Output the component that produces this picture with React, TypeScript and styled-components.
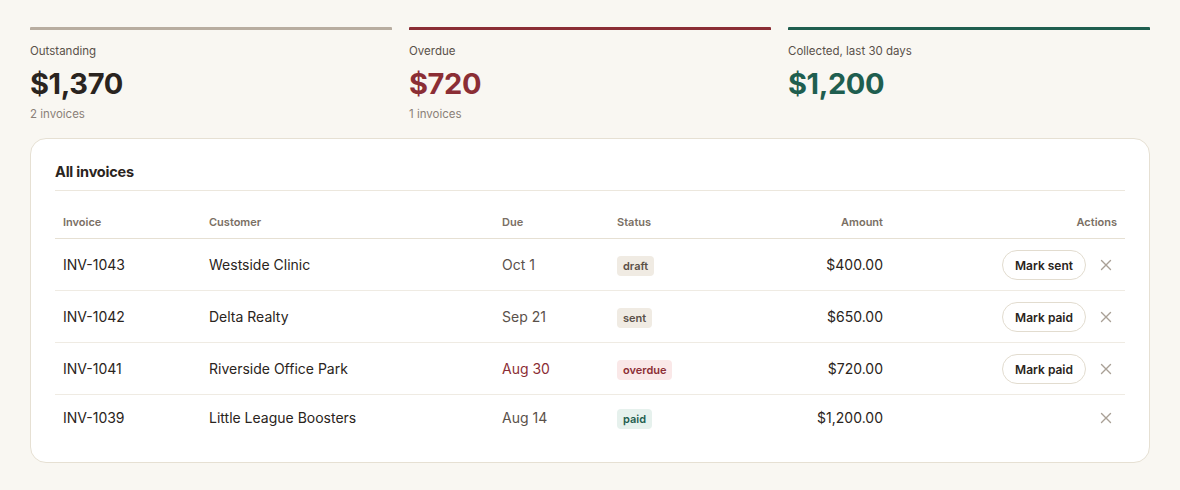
import React from "react";
import styled, { createGlobalStyle } from "styled-components";

const Global = createGlobalStyle`
  html, body { margin: 0; padding: 0; background: #f9f7f2; }
  body { font-family: Inter, "Noto Sans", sans-serif; color: #2a2420; -webkit-font-smoothing: antialiased; }
  * { box-sizing: border-box; }
`;

const Page = styled.div`
  padding: 27px 30px 26px;
  display: flex;
  flex-direction: column;
  gap: 17px;
`;

const Stats = styled.div`
  display: grid;
  grid-template-columns: repeat(3, 1fr);
  gap: 17px;
`;

const Stat = styled.div<{ $accent: string }>`
  border-top: 3px solid ${(p) => p.$accent};
  padding-top: 13px;
  height: 94px;
  border-radius: 1px;
`;

const StatLabel = styled.div`
  font-size: 11.5px;
  color: #5a514a;
  line-height: 16px;
`;

const StatValue = styled.div<{ $color: string }>`
  font-size: 29px;
  font-weight: 700;
  letter-spacing: -0.4px;
  color: ${(p) => p.$color};
  line-height: 36px;
  margin-top: 7px;
`;

const StatSub = styled.div`
  font-size: 11.5px;
  color: #8a8078;
  line-height: 16px;
  margin-top: 4px;
`;

const Card = styled.div`
  background: #ffffff;
  border: 1px solid #e6e0d3;
  border-radius: 16px;
  padding: 23px 24px 22px;
`;

const CardTitle = styled.h2`
  margin: 0;
  font-size: 14.5px;
  font-weight: 700;
  letter-spacing: -0.2px;
  line-height: 20px;
  padding-bottom: 8px;
  border-bottom: 1px solid #ece7dd;
`;

const Table = styled.table`
  width: 100%;
  border-collapse: collapse;
  margin-top: 16px;
`;

const Th = styled.th<{ $align?: string; $w?: number }>`
  text-align: ${(p) => p.$align || "left"};
  font-size: 11px;
  font-weight: 600;
  color: #7a6f64;
  padding: 8px 8px 9px;
  border-bottom: 1px solid #e6e0d3;
  ${(p) => (p.$w ? `width: ${p.$w}px;` : "")}
`;

const Tr = styled.tr`
  & + & td { border-top: 1px solid #efebe3; }
`;

const Td = styled.td<{ $align?: string; $color?: string }>`
  text-align: ${(p) => p.$align || "left"};
  font-size: 14px;
  line-height: 20px;
  color: ${(p) => p.$color || "#2a2420"};
  padding: 11px 8px 10px;
`;

const Badge = styled.span<{ $bg: string; $fg: string }>`
  display: inline-block;
  font-size: 11px;
  font-weight: 600;
  background: ${(p) => p.$bg};
  color: ${(p) => p.$fg};
  padding: 3px 6px;
  border-radius: 4px;
  line-height: 14px;
  vertical-align: middle;
`;

const Actions = styled.div`
  display: flex;
  justify-content: flex-end;
  align-items: center;
  gap: 9px;
`;

const PillButton = styled.button`
  font-family: inherit;
  font-size: 12px;
  font-weight: 600;
  color: #2a2420;
  background: #fff;
  border: 1px solid #e2dccf;
  border-radius: 999px;
  height: 30px;
  padding: 0 12px;
  cursor: pointer;
`;

const IconButton = styled.button`
  border: none;
  background: transparent;
  color: #a9a096;
  width: 22px;
  height: 24px;
  padding: 0;
  display: flex;
  align-items: center;
  justify-content: center;
  cursor: pointer;
`;

const X = () => (
  <svg width="12" height="12" viewBox="0 0 12 12" fill="none" stroke="currentColor" strokeWidth="1.4" strokeLinecap="round">
    <path d="M1.5 1.5 L10.5 10.5 M10.5 1.5 L1.5 10.5" />
  </svg>
);

const badgeColors: Record<string, [string, string]> = {
  draft: ["#f0ebe3", "#5a5048"],
  sent: ["#f0ebe3", "#5a5048"],
  overdue: ["#fae8e8", "#8b2e35"],
  paid: ["#e6f1ed", "#1f5e4f"],
};

const rows = [
  { id: "INV-1043", customer: "Westside Clinic", due: "Oct 1", status: "draft", amount: "$400.00", action: "Mark sent" },
  { id: "INV-1042", customer: "Delta Realty", due: "Sep 21", status: "sent", amount: "$650.00", action: "Mark paid" },
  { id: "INV-1041", customer: "Riverside Office Park", due: "Aug 30", status: "overdue", amount: "$720.00", action: "Mark paid" },
  { id: "INV-1039", customer: "Little League Boosters", due: "Aug 14", status: "paid", amount: "$1,200.00", action: "" },
];

export default function App() {
  return (
    <>
      <Global />
      <Page>
        <Stats>
          <Stat $accent="#b8ada0">
            <StatLabel>Outstanding</StatLabel>
            <StatValue $color="#2a2420">$1,370</StatValue>
            <StatSub>2 invoices</StatSub>
          </Stat>
          <Stat $accent="#8b2e35">
            <StatLabel>Overdue</StatLabel>
            <StatValue $color="#8b2e35">$720</StatValue>
            <StatSub>1 invoices</StatSub>
          </Stat>
          <Stat $accent="#1f5e4f">
            <StatLabel>Collected, last 30 days</StatLabel>
            <StatValue $color="#1f5e4f">$1,200</StatValue>
          </Stat>
        </Stats>
        <Card>
          <CardTitle>All invoices</CardTitle>
          <Table>
            <thead>
              <tr>
                <Th $w={146}>Invoice</Th>
                <Th $w={293}>Customer</Th>
                <Th $w={115}>Due</Th>
                <Th $w={120}>Status</Th>
                <Th $align="right">Amount</Th>
                <Th $align="right" $w={234}>Actions</Th>
              </tr>
            </thead>
            <tbody>
              {rows.map((r) => (
                <Tr key={r.id}>
                  <Td>{r.id}</Td>
                  <Td>{r.customer}</Td>
                  <Td $color={r.status === "overdue" ? "#8b2e35" : "#5a514a"}>{r.due}</Td>
                  <Td>
                    <Badge $bg={badgeColors[r.status][0]} $fg={badgeColors[r.status][1]}>{r.status}</Badge>
                  </Td>
                  <Td $align="right">{r.amount}</Td>
                  <Td $align="right">
                    <Actions>
                      {r.action && <PillButton>{r.action}</PillButton>}
                      <IconButton aria-label="Delete"><X /></IconButton>
                    </Actions>
                  </Td>
                </Tr>
              ))}
            </tbody>
          </Table>
        </Card>
      </Page>
    </>
  );
}
